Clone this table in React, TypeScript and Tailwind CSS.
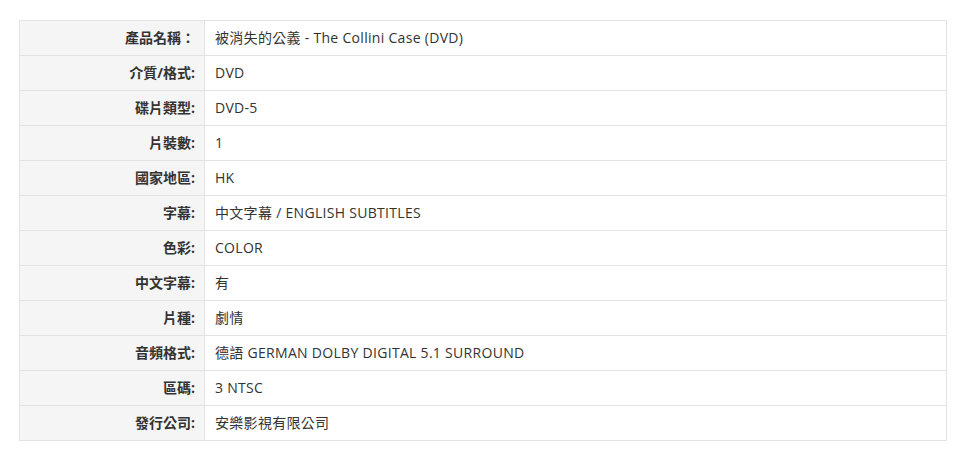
import React from "react";

const rows: [string, string][] = [
  ["產品名稱：", "被消失的公義 - The Collini Case (DVD)"],
  ["介質/格式:", "DVD"],
  ["碟片類型:", "DVD-5"],
  ["片裝數:", "1"],
  ["國家地區:", "HK"],
  ["字幕:", "中文字幕 / ENGLISH SUBTITLES"],
  ["色彩:", "COLOR"],
  ["中文字幕:", "有"],
  ["片種:", "劇情"],
  ["音頻格式:", "德語 GERMAN DOLBY DIGITAL 5.1 SURROUND"],
  ["區碼:", "3 NTSC"],
  ["發行公司:", "安樂影視有限公司"],
];

export default function App() {
  return (
    <div
      className="w-[965px] h-[460px] bg-white pt-[20px] pl-[19px]"
      style={{ fontFamily: '"Open Sans", "Noto Sans CJK TC", sans-serif' }}
    >
      <table className="w-[928px] border-collapse text-[#333]">
        <tbody>
          {rows.map(([k, v], i) => (
            <tr key={i} className="h-[35px]">
              <td className="w-[185px] border border-[#e3e3e3] bg-[#f5f5f5] pr-[9px] text-right text-[14px] font-bold leading-none">
                {k}
              </td>
              <td className="border border-[#e3e3e3] bg-white pl-[10px] text-[14px] leading-none tracking-[0.3px]">
                {v}
              </td>
            </tr>
          ))}
        </tbody>
      </table>
    </div>
  );
}
